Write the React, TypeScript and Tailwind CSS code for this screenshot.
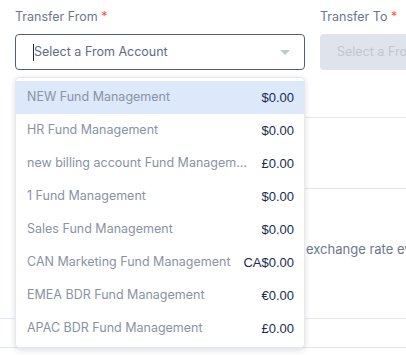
const accounts = [
  { name: 'NEW Fund Management', amount: '$0.00' },
  { name: 'HR Fund Management', amount: '$0.00' },
  { name: 'new billing account Fund Management', amount: '£0.00' },
  { name: '1 Fund Management', amount: '$0.00' },
  { name: 'Sales Fund Management', amount: '$0.00' },
  { name: 'CAN Marketing Fund Management', amount: 'CA$0.00' },
  { name: 'EMEA BDR Fund Management', amount: '€0.00' },
  { name: 'APAC BDR Fund Management', amount: '£0.00' },
]

function Label({ text }: { text: string }) {
  return (
    <div className="text-[12.5px] leading-4 text-[#6b778c] mb-[9px]">
      {text} <span className="text-[#ff5630]">*</span>
    </div>
  )
}

export default function App() {
  return (
    <div
      className="relative w-[406px] h-[355px] overflow-hidden bg-white"
      style={{ fontFamily: 'Inter, "Noto Sans", sans-serif' }}
    >
      <div className="flex gap-[15px] pl-[15px] pt-[9px]">
        <div className="w-[290px] shrink-0">
          <Label text="Transfer From" />
          <div className="h-[36px] border border-[#505f79] rounded-[4px] flex items-center pl-[17px] pr-[14px]">
            <span className="w-px h-[17px] bg-[#172b4d]" />
            <span className="text-[12.5px] text-[#5e6c84] flex-1">Select a From Account</span>
            <span className="w-0 h-0 border-l-[5px] border-r-[5px] border-t-[5px] border-l-transparent border-r-transparent border-t-[#c1c7d0]" />
          </div>
        </div>
        <div className="w-[200px] shrink-0">
          <Label text="Transfer To" />
          <div className="h-[36px] rounded-[4px] bg-[#dfe3eb] flex items-center pl-[17px]">
            <span className="text-[12.5px] text-[#c1c7d0]">Select a From Account</span>
          </div>
        </div>
      </div>

      <div className="mt-[47px] ml-[15px] border-t border-[#e4e7ed] h-[71px]" />
      <div className="ml-[15px] border-t border-[#e4e7ed] h-[130px] flex items-center pl-[291px] pb-[8px]">
        <span className="text-[13px] text-[#6b778c] whitespace-nowrap">exchange rate every day</span>
      </div>
      <div className="border-t border-[#e4e7ed] h-[29px]" />
      <div className="border-t border-[#e4e7ed]" />

      <div className="absolute left-[15px] top-[77px] w-[290px] bg-white border border-[#e6e8ec] rounded-[4px] shadow-[0_2px_6px_rgba(9,30,66,0.15)] pt-[3px] pb-[2px]">
        {accounts.map((a, i) => (
          <div
            key={a.name}
            className={`h-[33px] flex items-center pl-[11px] pr-[10px] gap-3 ${i === 0 ? 'bg-[#dde8fb]' : ''}`}
          >
            <span className="flex-1 min-w-0 truncate text-[12.5px] text-[#8993a4]">{a.name}</span>
            <span
              className="text-[13px] text-[#172b4d]"
              style={{ fontFamily: '"Liberation Sans", sans-serif' }}
            >
              {a.amount}
            </span>
          </div>
        ))}
      </div>
    </div>
  )
}
